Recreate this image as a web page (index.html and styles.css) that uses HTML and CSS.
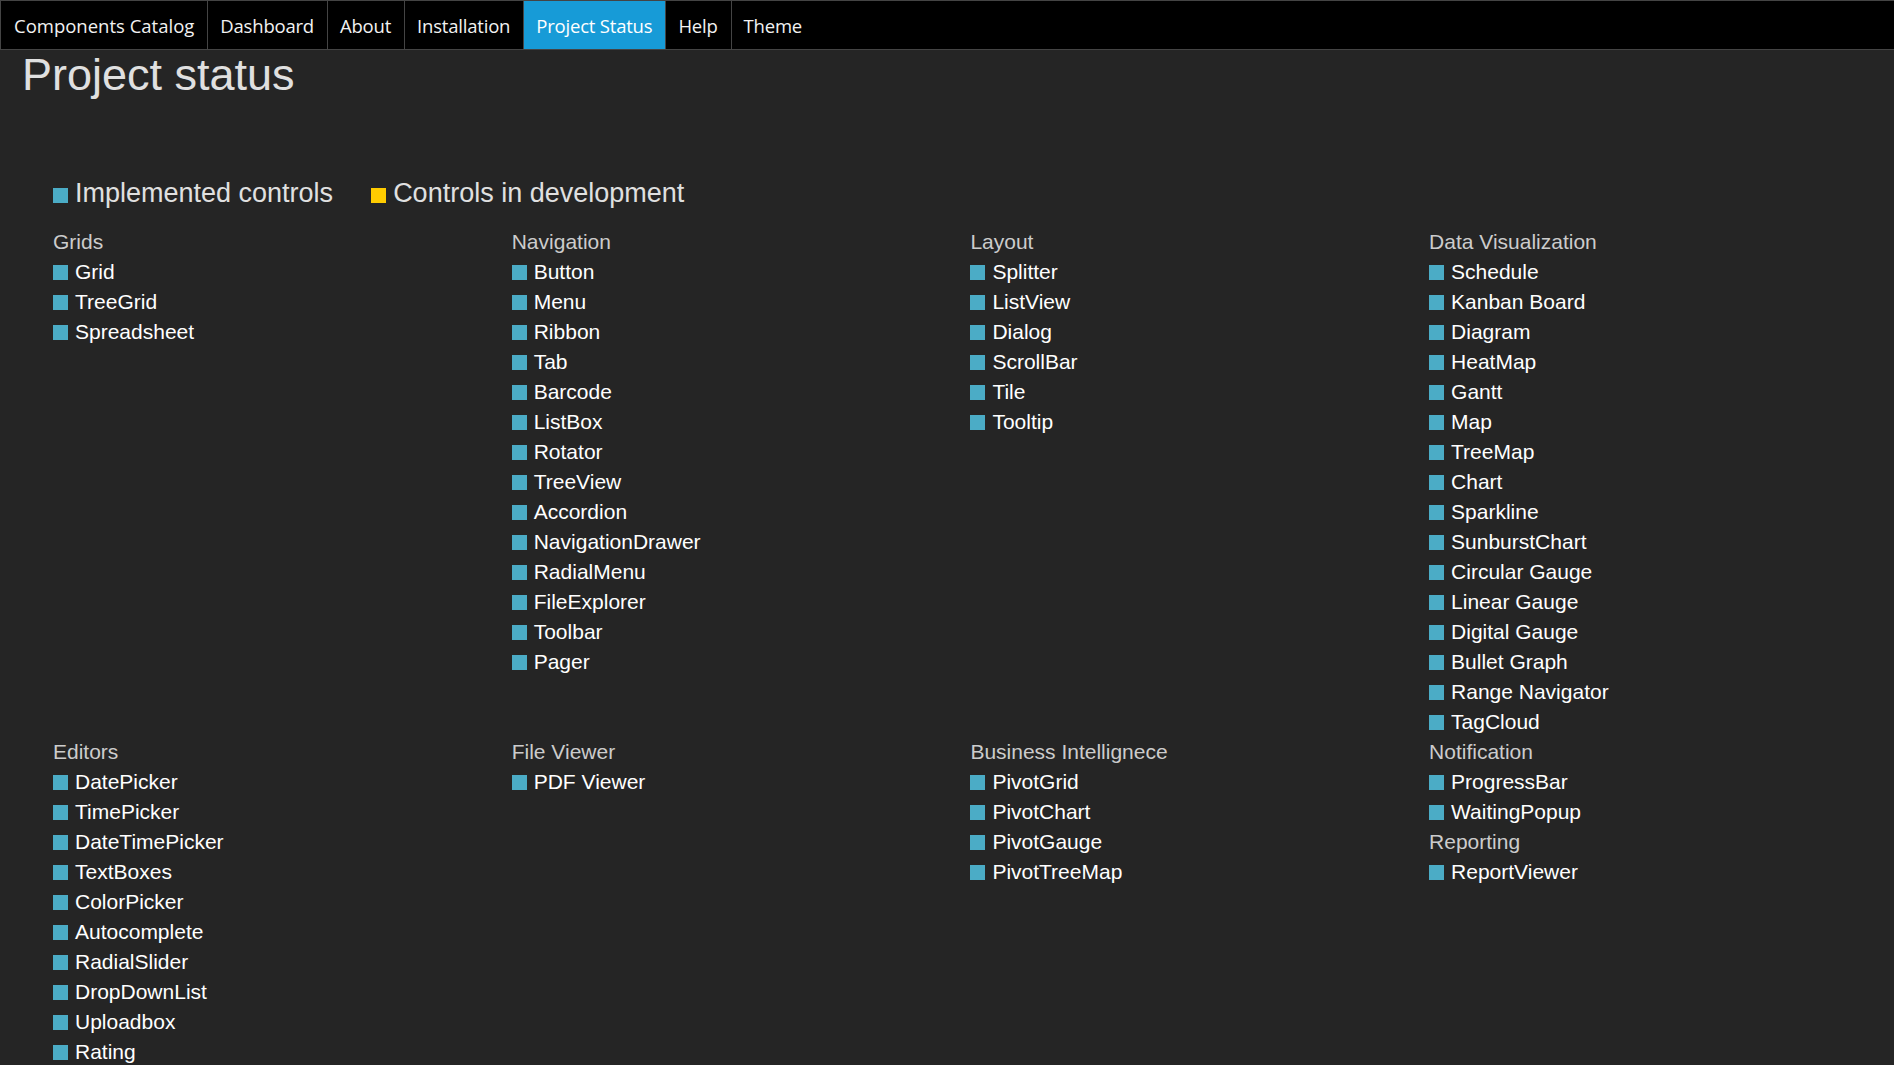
FILE: index.html
```html
<!DOCTYPE html>
<html>
<head>
<meta charset="utf-8">
<title>Project status</title>
<link rel="stylesheet" href="styles.css">
</head>
<body>
<nav class="topnav">
  <a class="nav-item first">Components Catalog</a>
  <a class="nav-item">Dashboard</a>
  <a class="nav-item">About</a>
  <a class="nav-item">Installation</a>
  <a class="nav-item active">Project Status</a>
  <a class="nav-item">Help</a>
  <a class="nav-item last">Theme</a>
</nav>
<main class="page">
  <h1 class="title">Project status</h1>
  <div class="legend">
    <span class="legend-entry"><span class="sq sq-done"></span>Implemented controls</span>
    <span class="legend-entry"><span class="sq sq-dev"></span>Controls in development</span>
  </div>
  <div class="catalog">
    <div class="group">
      <div class="group-title">Grids</div>
      <div class="item"><span class="sq"></span>Grid</div>
      <div class="item"><span class="sq"></span>TreeGrid</div>
      <div class="item"><span class="sq"></span>Spreadsheet</div>
    </div>
    <div class="group">
      <div class="group-title">Navigation</div>
      <div class="item"><span class="sq"></span>Button</div>
      <div class="item"><span class="sq"></span>Menu</div>
      <div class="item"><span class="sq"></span>Ribbon</div>
      <div class="item"><span class="sq"></span>Tab</div>
      <div class="item"><span class="sq"></span>Barcode</div>
      <div class="item"><span class="sq"></span>ListBox</div>
      <div class="item"><span class="sq"></span>Rotator</div>
      <div class="item"><span class="sq"></span>TreeView</div>
      <div class="item"><span class="sq"></span>Accordion</div>
      <div class="item"><span class="sq"></span>NavigationDrawer</div>
      <div class="item"><span class="sq"></span>RadialMenu</div>
      <div class="item"><span class="sq"></span>FileExplorer</div>
      <div class="item"><span class="sq"></span>Toolbar</div>
      <div class="item"><span class="sq"></span>Pager</div>
    </div>
    <div class="group">
      <div class="group-title">Layout</div>
      <div class="item"><span class="sq"></span>Splitter</div>
      <div class="item"><span class="sq"></span>ListView</div>
      <div class="item"><span class="sq"></span>Dialog</div>
      <div class="item"><span class="sq"></span>ScrollBar</div>
      <div class="item"><span class="sq"></span>Tile</div>
      <div class="item"><span class="sq"></span>Tooltip</div>
    </div>
    <div class="group">
      <div class="group-title">Data Visualization</div>
      <div class="item"><span class="sq"></span>Schedule</div>
      <div class="item"><span class="sq"></span>Kanban Board</div>
      <div class="item"><span class="sq"></span>Diagram</div>
      <div class="item"><span class="sq"></span>HeatMap</div>
      <div class="item"><span class="sq"></span>Gantt</div>
      <div class="item"><span class="sq"></span>Map</div>
      <div class="item"><span class="sq"></span>TreeMap</div>
      <div class="item"><span class="sq"></span>Chart</div>
      <div class="item"><span class="sq"></span>Sparkline</div>
      <div class="item"><span class="sq"></span>SunburstChart</div>
      <div class="item"><span class="sq"></span>Circular Gauge</div>
      <div class="item"><span class="sq"></span>Linear Gauge</div>
      <div class="item"><span class="sq"></span>Digital Gauge</div>
      <div class="item"><span class="sq"></span>Bullet Graph</div>
      <div class="item"><span class="sq"></span>Range Navigator</div>
      <div class="item"><span class="sq"></span>TagCloud</div>
    </div>
    <div class="group">
      <div class="group-title">Editors</div>
      <div class="item"><span class="sq"></span>DatePicker</div>
      <div class="item"><span class="sq"></span>TimePicker</div>
      <div class="item"><span class="sq"></span>DateTimePicker</div>
      <div class="item"><span class="sq"></span>TextBoxes</div>
      <div class="item"><span class="sq"></span>ColorPicker</div>
      <div class="item"><span class="sq"></span>Autocomplete</div>
      <div class="item"><span class="sq"></span>RadialSlider</div>
      <div class="item"><span class="sq"></span>DropDownList</div>
      <div class="item"><span class="sq"></span>Uploadbox</div>
      <div class="item"><span class="sq"></span>Rating</div>
    </div>
    <div class="group">
      <div class="group-title">File Viewer</div>
      <div class="item"><span class="sq"></span>PDF Viewer</div>
    </div>
    <div class="group">
      <div class="group-title">Business Intellignece</div>
      <div class="item"><span class="sq"></span>PivotGrid</div>
      <div class="item"><span class="sq"></span>PivotChart</div>
      <div class="item"><span class="sq"></span>PivotGauge</div>
      <div class="item"><span class="sq"></span>PivotTreeMap</div>
    </div>
    <div class="group">
      <div class="group-title">Notification</div>
      <div class="item"><span class="sq"></span>ProgressBar</div>
      <div class="item"><span class="sq"></span>WaitingPopup</div>
      <div class="group-title">Reporting</div>
      <div class="item"><span class="sq"></span>ReportViewer</div>
    </div>
  </div>
</main>
</body>
</html>
```
FILE: styles.css
```css
html, body {
  margin: 0;
  padding: 0;
}
body {
  background: #252525;
  font-family: "Liberation Sans", Arial, sans-serif;
  color: #fff;
  overflow: hidden;
}
.topnav {
  display: flex;
  height: 48px;
  background: #000;
  border-top: 1px solid #444;
  border-bottom: 1px solid #444;
  border-left: 1px solid #444;
}
.nav-item {
  display: flex;
  align-items: center;
  padding: 0 13px 0 12px;
  border-right: 1px solid #444;
  font-family: "Open Sans", "Noto Sans", sans-serif;
  font-size: 18.5px;
  color: #f2f2f2;
  letter-spacing: -0.2px;
}
.nav-item.first {
  padding: 0 13px 0 13px;
  letter-spacing: 0;
}
.nav-item.last {
  border-right: none;
}
.nav-item.active {
  background: #179bd7;
  color: #fff;
}
.page {
  padding: 0 0 0 22px;
}
.title {
  margin: 0;
  font-size: 45px;
  font-weight: normal;
  line-height: 50px;
  color: #e0e0e0;
}
.legend {
  display: flex;
  gap: 38px;
  margin: 75px 0 0 31px;
  font-size: 27px;
  line-height: 36px;
  color: #e0e0e0;
}
.legend-entry .sq {
  margin-right: 7px;
}
.sq {
  display: inline-block;
  width: 15px;
  height: 15px;
  background: #4bacc6;
  vertical-align: -1px;
  margin-right: 7px;
}
.sq-dev {
  background: #ffcc00;
}
.catalog {
  display: grid;
  grid-template-columns: repeat(4, 458.7px);
  margin: 16px 0 0 31px;
  font-size: 21px;
  line-height: 30px;
}
.group-title {
  color: #cccccc;
}
.item {
  color: #fff;
}
```
